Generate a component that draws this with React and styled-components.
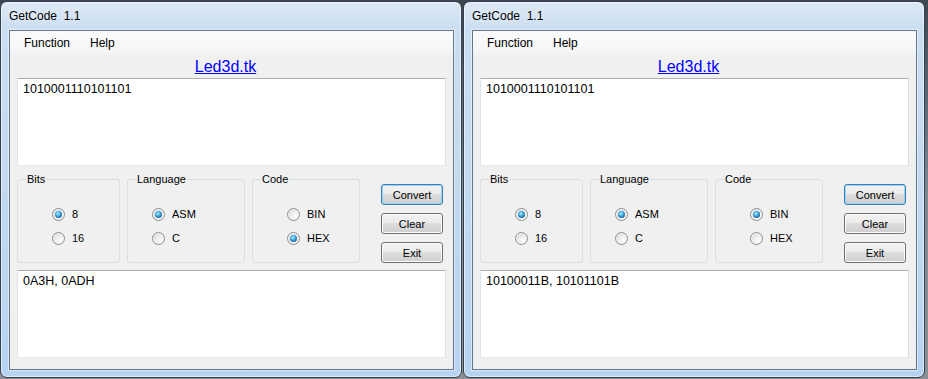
import React from 'react';
import styled, { createGlobalStyle } from 'styled-components';

const GlobalStyle = createGlobalStyle`
    html, body {
        margin:0;
        padding:0;
    }
    body {
        background:#6f7883;
        font-family:"Liberation Sans", Arial, sans-serif;
    }
`
const Desktop = styled.div`
    display:flex;
    gap:1px;
    padding-top:1px;
    width:928px;
    height:379px;
    box-sizing:border-box;
    overflow:hidden;
    background:linear-gradient(180deg, #3d4650 0%, #7d8792 50%, #8b8f94 100%);
`
const Window = styled.div`
    width:462px;
    height:377px;
    box-sizing:border-box;
    border:1px solid #34404d;
    border-radius:7px;
    padding:0 7px 7px 8px;
    display:flex;
    flex-direction:column;
    background:linear-gradient(180deg, #dde9f5 0px, #cbdef2 26px, #c0d8f0 60%, #b6d3f2 100%);
    box-shadow:inset 0 0 0 1px rgba(255,255,255,0.55);
`
const TitleBar = styled.div`
    height:28px;
    box-sizing:border-box;
    padding-top:6px;
    font-size:12px;
    line-height:16px;
    color:#000;
    white-space:pre;
    text-shadow:0 0 6px rgba(255,255,255,0.9);
`
const Client = styled.div`
    flex:1;
    display:flex;
    flex-direction:column;
    background:#f0f0f0;
    border:1px solid #65758a;
    box-shadow:0 0 0 1px rgba(255,255,255,0.45);
    padding-bottom:11px;
`
const MenuBar = styled.div`
    display:flex;
    height:24px;
    padding-left:4px;
    background:linear-gradient(180deg, #fbfbfc 0%, #f6f7f8 60%, #f1f2f4 100%);
    font-size:12px;
    line-height:24px;
    color:#000;
`
const MenuItem = styled.span`
    padding:0 10px;
`
const LinkRow = styled.div`
    height:23px;
    box-sizing:border-box;
    padding:2px 12px 0 0;
    text-align:center;
`
const Link = styled.a`
    color:#0000ff;
    font-size:16px;
    line-height:20px;
    text-decoration:underline;
    cursor:pointer;
`
const TextBox = styled.div`
    margin:0 7px;
    height:88px;
    box-sizing:border-box;
    background:#fff;
    border:1px solid;
    border-color:#abadb3 #dbdfe6 #e3e9ef #e2e3ea;
    padding:3px 5px;
    font-size:12.5px;
    line-height:15px;
    color:#000;
`
const OptionsRow = styled.div`
    display:flex;
    gap:7px;
    height:90px;
    margin:7px;
`
const Group = styled.fieldset`
    width:${p => p.$width}px;
    height:90px;
    box-sizing:border-box;
    margin:0;
    padding:0;
    border:1px solid #d5dfe5;
    border-radius:3px;
    min-width:0;
`
const Legend = styled.legend`
    margin-left:8px;
    padding:0 1px;
    font-size:11px;
    line-height:13px;
    color:#000;
`
const Options = styled.div`
    display:flex;
    flex-direction:column;
    gap:8px;
    padding-top:20px;
    padding-left:${p => p.$indent}px;
`
const RadioLabel = styled.label`
    display:flex;
    align-items:center;
    gap:7px;
    height:16px;
    font-size:11px;
    color:#000;
`
const Radio = styled.span`
    position:relative;
    width:13px;
    height:13px;
    box-sizing:border-box;
    border-radius:50%;
    border:1px solid #8d8d8d;
    background:radial-gradient(circle at 70% 72%, #fdfdfd 0%, #ececec 45%, #cbcbcb 100%);
    box-shadow:inset 0 0 0 1px #f5f5f5;
    &::after {
        content:'';
        display:${p => (p.$checked ? 'block' : 'none')};
        position:absolute;
        left:2px;
        top:2px;
        width:7px;
        height:7px;
        border-radius:50%;
        background:radial-gradient(circle at 42% 38%, #bdf0ff 0%, #49b0e6 35%, #17609a 75%, #0b3a64 100%);
    }
`
const ButtonColumn = styled.div`
    display:flex;
    flex-direction:column;
    gap:8px;
    margin-left:14px;
    padding-top:11px;
`
const Button = styled.button`
    width:62px;
    height:21px;
    box-sizing:border-box;
    padding:0;
    font-family:inherit;
    font-size:11px;
    color:#000;
    border:1px solid ${p => (p.$default ? '#3c7fb1' : '#707070')};
    border-radius:3px;
    background:linear-gradient(180deg, #f2f2f2 0%, #ebebeb 45%, #dddddd 50%, #cfcfcf 100%);
    box-shadow:inset 0 0 0 1px ${p => (p.$default ? '#8fd6f7' : '#fbfbfb')};
`

const RadioGroup = ({ title, width, indent, options, value }) => (
    <Group $width={width}>
        <Legend>{title}</Legend>
        <Options $indent={indent}>
            {options.map(o => (
                <RadioLabel key={o}>
                    <Radio $checked={o === value} />
                    {o}
                </RadioLabel>
            ))}
        </Options>
    </Group>
)

const GetCodeWindow = ({ code, output }) => (
    <Window>
        <TitleBar>GetCode  1.1</TitleBar>
        <Client>
            <MenuBar>
                <MenuItem>Function</MenuItem>
                <MenuItem>Help</MenuItem>
            </MenuBar>
            <LinkRow>
                <Link>Led3d.tk</Link>
            </LinkRow>
            <TextBox>1010001110101101</TextBox>
            <OptionsRow>
                <RadioGroup title="Bits" width={103} indent={34} options={['8', '16']} value="8" />
                <RadioGroup title="Language" width={118} indent={24} options={['ASM', 'C']} value="ASM" />
                <RadioGroup title="Code" width={108} indent={34} options={['BIN', 'HEX']} value={code} />
                <ButtonColumn>
                    <Button $default>Convert</Button>
                    <Button>Clear</Button>
                    <Button>Exit</Button>
                </ButtonColumn>
            </OptionsRow>
            <TextBox>{output}</TextBox>
        </Client>
    </Window>
)

const App = () => {
    return (
        <Desktop>
            <GlobalStyle />
            <GetCodeWindow code="HEX" output="0A3H, 0ADH" />
            <GetCodeWindow code="BIN" output="10100011B, 10101101B" />
        </Desktop>
    )
}

export default App
